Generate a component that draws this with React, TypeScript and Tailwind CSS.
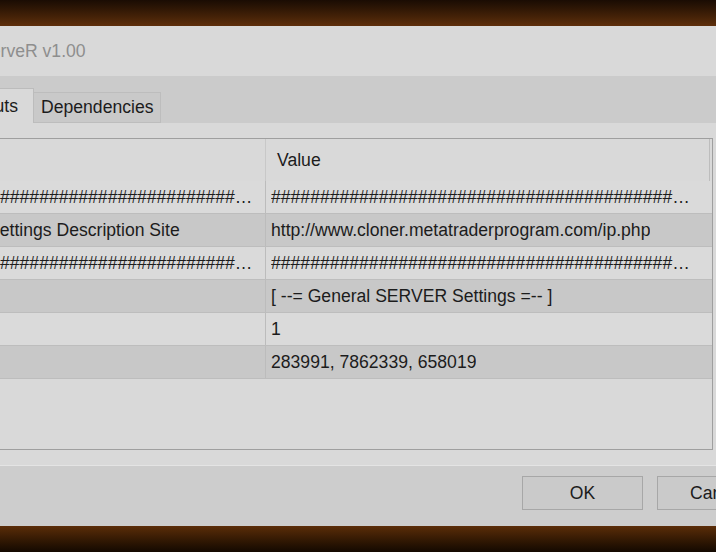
const HASH = "#".repeat(90);

const rows = [
  { name: HASH, value: HASH, dark: false, cut: false },
  {
    name: "Settings Description Site",
    value: "http://www.cloner.metatraderprogram.com/ip.php",
    dark: true,
    cut: true,
  },
  { name: HASH, value: HASH, dark: false, cut: false },
  { name: "", value: "[ --= General SERVER Settings =-- ]", dark: true, cut: false },
  { name: "", value: "1", dark: false, cut: false },
  { name: "", value: "283991, 7862339, 658019", dark: true, cut: false },
];

export default function App() {
  return (
    <div className="flex h-[552px] w-[716px] flex-col overflow-hidden font-['Liberation_Sans',Arial,sans-serif] text-[17.6px] text-[#1c1c1c]">
      {/* desktop strip above the dialog */}
      <div className="h-[26px] shrink-0 bg-gradient-to-b from-[#1a0c03] to-[#5e2f0b]" />

      {/* title bar */}
      <div className="flex h-[50px] shrink-0 items-center bg-[#d9d9d9]">
        <span className="-ml-[21px] whitespace-nowrap text-[#8e8e8e]">ServeR v1.00</span>
      </div>

      {/* tab strip */}
      <div className="flex h-[47px] shrink-0 items-end bg-[#cbcbcb]">
        <div className="flex h-[35px] w-[34px] items-center justify-end overflow-hidden border-r border-t border-[#bcbcbc] bg-[#d9d9d9] pr-[15px]">
          <span className="whitespace-nowrap">Inputs</span>
        </div>
        <div className="flex h-[31px] items-center border-y border-r border-[#bdbdbd] bg-[#c9c9c9] pl-[7px] pr-[6px]">
          <span className="whitespace-nowrap">Dependencies</span>
        </div>
      </div>

      {/* tab panel */}
      <div className="flex flex-1 flex-col bg-[#d9d9d9] pb-[15px] pr-[3px] pt-[15px]">
        <div className="flex flex-1 flex-col border-y border-r border-[#9f9f9f] bg-[#d9d9d9]">
          {/* header */}
          <div className="flex h-[42px] shrink-0 bg-[#d9d9d9]">
            <div className="w-[266px] shrink-0 border-r border-[#c8c8c8]" />
            <div className="flex flex-1 items-center border-r border-[#bdbdbd] pl-[11px]">Value</div>
            <div className="w-[2px] shrink-0" />
          </div>

          {rows.map((row, i) => (
            <div
              key={i}
              className={
                "flex h-[33px] shrink-0 border-b border-[#bdbdbd] " +
                (row.dark ? "bg-[#c8c8c8]" : "bg-[#dadada]")
              }
            >
              <div className="flex w-[266px] shrink-0 items-center overflow-hidden border-r border-[#bcbcbc] pr-[8px]">
                <span
                  className={
                    "overflow-hidden text-ellipsis whitespace-nowrap " + (row.cut ? "-ml-[12px]" : "")
                  }
                >
                  {row.name}
                </span>
              </div>
              <div className="flex min-w-0 flex-1 items-center overflow-hidden pl-[5px] pr-[14px]">
                <span className="overflow-hidden text-ellipsis whitespace-nowrap">{row.value}</span>
              </div>
            </div>
          ))}
        </div>
      </div>

      {/* button bar */}
      <div className="flex h-[61px] shrink-0 justify-end border-t border-[#e4e4e4] bg-[#cdcdcd] pt-[10px]">
        <div className="-mr-[62px] flex gap-[14px]">
          <button className="h-[34px] w-[121px] border border-[#a7a7a7] bg-[#cacaca]">OK</button>
          <button className="h-[34px] w-[121px] border border-[#a7a7a7] bg-[#cacaca]">Cancel</button>
        </div>
      </div>

      {/* desktop strip below the dialog */}
      <div className="h-[26px] shrink-0 bg-gradient-to-b from-[#5b2d09] to-[#140901]" />
    </div>
  );
}
